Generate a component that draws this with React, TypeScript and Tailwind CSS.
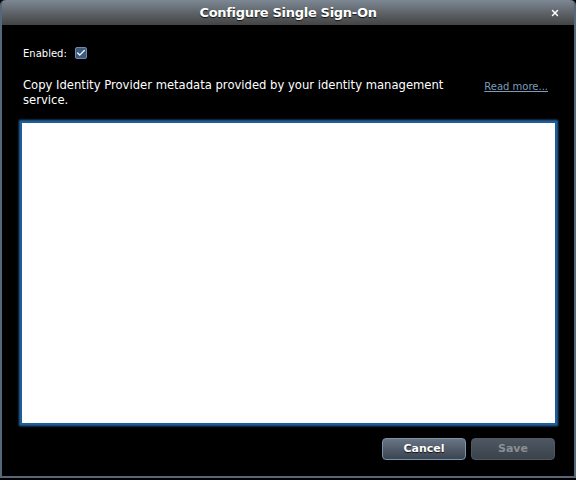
import { Check, X } from 'lucide-react';

export default function App() {
  return (
    <div className="w-[576px] h-[480px] bg-black overflow-hidden" style={{ fontFamily: '"DejaVu Sans", Verdana, sans-serif' }}>
      <div className="h-[478px] flex flex-col rounded-t-[5px] border-x-2 border-b-2 border-[#56677a] bg-black">
        {/* Title bar */}
        <div className="relative h-[25px] shrink-0 flex items-center justify-center rounded-t-[4px] bg-gradient-to-b from-[#7d8894] to-[#434343]">
          <span className="text-[13px] font-bold text-white tracking-[-0.3px] [text-shadow:0_1px_1px_rgba(0,0,0,0.8)]">
            Configure Single Sign-On
          </span>
          <button className="absolute right-[14px] top-[8px] text-white">
            <X size={10} strokeWidth={3.5} />
          </button>
        </div>

        {/* Body */}
        <div className="flex-1 flex flex-col px-[18px] pt-[20px] pb-[16px]">
          <div className="flex items-center gap-[8px] pl-[3px] h-[16px]">
            <span className="text-[10px] text-white font-medium">Enabled:</span>
            <span className="w-[12px] h-[12px] rounded-[2px] bg-[#3c5a7e] border border-[#6f8aa8] flex items-center justify-center">
              <Check size={12} strokeWidth={3} className="text-white" />
            </span>
          </div>

          <div className="flex justify-between items-start mt-[17px] pl-[3px]">
            <p className="text-[11.6px] leading-[15px] font-medium text-white w-[440px]">
              Copy Identity Provider metadata provided by your identity management service.
            </p>
            <a className="text-[10px] text-[#7b9cbb] underline mt-[1px] mr-[8px]">Read more...</a>
          </div>

          <textarea className="mt-[13px] h-[304px] w-[537px] resize-none bg-white border-2 border-[#1c5d9a] shadow-[0_0_2px_1px_#2a6aa8] outline-none" />

          <div className="flex justify-end gap-[5px] mt-[13px] pr-[1px]">
            <button className="w-[84px] h-[22px] rounded-[4px] text-[11px] font-bold text-white border border-[#7c93ad] bg-gradient-to-b from-[#6a7584] to-[#3b4450] [text-shadow:0_1px_1px_rgba(0,0,0,0.8)]">
              Cancel
            </button>
            <button className="w-[84px] h-[22px] rounded-[4px] text-[11px] font-bold text-[#8a8f95] border border-[#4f5862] bg-gradient-to-b from-[#4e5762] to-[#3a424b]">
              Save
            </button>
          </div>
        </div>
      </div>
    </div>
  );
}
